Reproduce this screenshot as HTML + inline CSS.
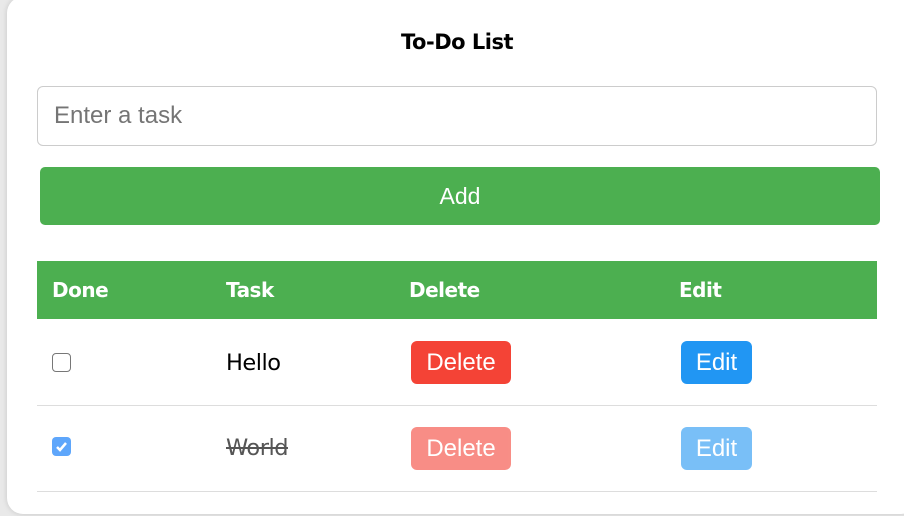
<!DOCTYPE html>
<html><head><style>
body{margin:0;width:904px;height:516px;background:#e9e9e9;overflow:hidden;position:relative;font-family:"Liberation Sans",sans-serif}
.card{position:absolute;left:7px;top:-3px;width:910px;height:517px;background:#fff;border-radius:16px;box-shadow:0 0 6px rgba(0,0,0,.15)}
.t{position:absolute;left:0;width:914px;top:30px;text-align:center;font:bold 21px "DejaVu Sans",sans-serif;color:#000;letter-spacing:-0.5px}
.in{position:absolute;left:37px;top:86px;width:838px;height:58px;border:1px solid #ccc;border-radius:6px;font-size:24px;color:#757575;line-height:58px;box-sizing:content-box}
.in span{margin-left:16px}
.add{position:absolute;left:40px;top:167px;width:840px;height:58px;background:#4caf50;border-radius:5px;color:#fff;font-size:23px;text-align:center;line-height:58px}
.hd{position:absolute;left:37px;top:261px;width:840px;height:58px;background:#4caf50}
.hd span{position:absolute;top:17px;color:#fff;font:bold 20px "DejaVu Sans",sans-serif;letter-spacing:-0.5px}
.row{position:absolute;left:37px;width:840px;height:85px;border-bottom:1px solid #ddd}
.cb{position:absolute;left:15px;top:34px;width:19px;height:19px;border:1.5px solid #777;border-radius:4px;box-sizing:border-box}
.cb.on{background:#5ea6fb;border:none;width:19px;height:19px;left:15px;top:33px}
.txt{position:absolute;left:189px;top:31px;font:22.5px "DejaVu Sans",sans-serif;color:#000;letter-spacing:-0.5px}
.del{position:absolute;left:374px;top:22px;width:100px;height:43px;background:#f44336;border-radius:6px;color:#fff;font-size:24px;text-align:center;line-height:43px}
.ed{position:absolute;left:644px;top:22px;width:71px;height:43px;background:#2196f3;border-radius:6px;color:#fff;font-size:24px;text-align:center;line-height:43px}
.dim .del,.dim .ed{opacity:.6}
</style></head><body>
<div class="card"></div>
<div class="t">To-Do List</div>
<div class="in"><span>Enter a task</span></div>
<div class="add">Add</div>
<div class="hd"><span style="left:15px">Done</span><span style="left:189px">Task</span><span style="left:372px">Delete</span><span style="left:642px">Edit</span></div>
<div class="row" style="top:319px;height:86px"><div class="cb"></div><div class="txt">Hello</div><div class="del">Delete</div><div class="ed">Edit</div></div>
<div class="row dim" style="top:406px"><div class="cb on" style="top:31px"><svg width="19" height="19" viewBox="0 0 19 19"><path d="M5 10l3 3 6-7" stroke="#fff" stroke-width="2.5" fill="none"/></svg></div><div class="txt" style="color:#555;text-decoration:line-through;top:29px">World</div><div class="del" style="top:21px">Delete</div><div class="ed" style="top:21px">Edit</div></div>
</body></html>
